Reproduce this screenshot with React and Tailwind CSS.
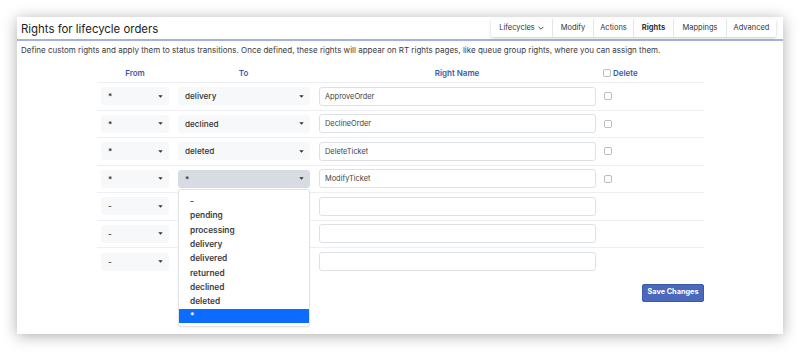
import React from "react";

const font = { fontFamily: "Inter, 'Noto Sans', sans-serif" };

function Caret() {
  return (
    <svg width="5" height="3" viewBox="0 0 5 3" className="shrink-0">
      <path d="M0.3 0.3 L4.7 0.3 L2.5 2.8 Z" fill="#333" />
    </svg>
  );
}

function Select({ value, width, active, children }) {
  return (
    <div className="relative">
      <div
        className={`flex h-[18px] items-center justify-between rounded-[3px] pl-[7px] pr-[6px] text-[8.2px] font-medium text-[#333] ${
          active ? "bg-[#d8dce2]" : "bg-[#f7f8fa]"
        } ${width}`}
      >
        <span>{value}</span>
        <Caret />
      </div>
      {children}
    </div>
  );
}

function Checkbox() {
  return <div className="h-[8px] w-[8px] rounded-[2px] border border-[#b9bcc2] bg-white" />;
}

const rows = [
  { from: "*", to: "delivery", name: "ApproveOrder", del: true },
  { from: "*", to: "declined", name: "DeclineOrder", del: true },
  { from: "*", to: "deleted", name: "DeleteTicket", del: true },
  { from: "*", to: "*", name: "ModifyTicket", del: true, open: true },
  { from: "-", to: null, name: "", del: false },
  { from: "-", to: null, name: "", del: false },
  { from: "-", to: null, name: "", del: false },
];

const options = ["-", "pending", "processing", "delivery", "delivered", "returned", "declined", "deleted"];

const tabs = [
  { label: "Lifecycles", caret: true, w: "w-[61px]" },
  { label: "Modify", w: "w-[41px]" },
  { label: "Actions", w: "w-[40px]" },
  { label: "Rights", bold: true, w: "w-[40px]" },
  { label: "Mappings", w: "w-[53px]" },
  { label: "Advanced", w: "w-[50px]" },
];

export default function App() {
  return (
    <div className="h-[352px] w-[800px] bg-white pl-[17px] pt-[17px]" style={font}>
      <div className="h-[317px] w-[766px] bg-white shadow-[0_2px_14px_rgba(0,0,0,0.32)]">
        <div className="flex h-[24px] items-start justify-between border-b-2 border-[#a3b3e0]">
          <div className="pl-[4px] pt-[3px] text-[11.4px] leading-[18px] text-[#222]">Rights for lifecycle orders</div>
          <div className="mr-[7px] mt-[2px] flex h-[18px] rounded-[2px] bg-white shadow-[0_1px_3px_rgba(0,0,0,0.22)]">
            {tabs.map((t, i) => (
              <div
                key={t.label}
                className={`flex items-center justify-center gap-[3px] text-[7.5px] text-[#333] ${t.w} ${
                  t.bold ? "font-bold text-[#111]" : ""
                } ${i > 0 ? "border-l border-[#e3e5e9]" : ""}`}
              >
                <span>{t.label}</span>
                {t.caret && (
                  <svg width="6" height="4" viewBox="0 0 6 4">
                    <path d="M0.6 0.8 L3 3.2 L5.4 0.8" stroke="#333" strokeWidth="0.9" fill="none" />
                  </svg>
                )}
              </div>
            ))}
          </div>
        </div>
        <div className="whitespace-nowrap pl-[4px] pt-[3px] text-[8px] leading-[12px] text-[#3a3a3a]">
          Define custom rights and apply them to status transitions. Once defined, these rights will appear on RT rights pages, like queue group rights, where you can assign them.
        </div>
        <div className="ml-[80px] mt-[7px] w-[607px]">
          <div className="grid h-[20px] grid-cols-[76px_141px_286px_104px] items-center border-b border-[#eceef1] text-[8px] font-semibold text-[#3d5aa8]">
            <div className="text-center">From</div>
            <div className="text-center">To</div>
            <div className="text-center">Right Name</div>
            <div className="flex items-center gap-[2px] pl-[3px]">
              <Checkbox />
              <span>Delete</span>
            </div>
          </div>
          {rows.map((r, i) => (
            <div
              key={i}
              className={`grid h-[27.5px] grid-cols-[76px_141px_286px_104px] items-center ${
                i < rows.length - 1 ? "border-b border-[#eceef1]" : ""
              }`}
            >
              <div className="pl-[4px]">
                <Select value={r.from} width="w-[68px]" />
              </div>
              <div className="pl-[5px]">
                {r.to !== null && (
                  <Select value={r.to} width="w-[132px]" active={r.open}>
                    {r.open && (
                      <div className="absolute left-0 top-[19px] z-10 w-[132px] rounded-[3px] border border-[#e1e3e7] bg-white pb-[3px] pt-[4px] shadow-[0_1px_2px_rgba(0,0,0,0.06)]">
                        {options.map((o) => (
                          <div key={o} className="flex h-[14.4px] items-center pl-[11px] text-[8.3px] font-semibold text-[#3a3d44]">
                            {o}
                          </div>
                        ))}
                        <div className="flex h-[14px] items-center bg-[#0b6cff] pl-[11px] text-[8.3px] font-semibold text-white">*</div>
                      </div>
                    )}
                  </Select>
                )}
              </div>
              <div className="pl-[5px]">
                <div className="flex h-[19px] w-[277px] items-center rounded-[3px] border border-[#dde0e5] bg-white pl-[5px] text-[7.4px] text-[#444]">
                  {r.name}
                </div>
              </div>
              <div className="pl-[4px]">{r.del && <Checkbox />}</div>
            </div>
          ))}
          <div className="mt-[8px] flex justify-end">
            <div className="flex h-[18px] w-[62px] items-center justify-center whitespace-nowrap rounded-[2px] border border-[#3b5aa8] bg-[#4a69bd] text-[7.3px] font-bold text-white">
              Save Changes
            </div>
          </div>
        </div>
      </div>
    </div>
  );
}
